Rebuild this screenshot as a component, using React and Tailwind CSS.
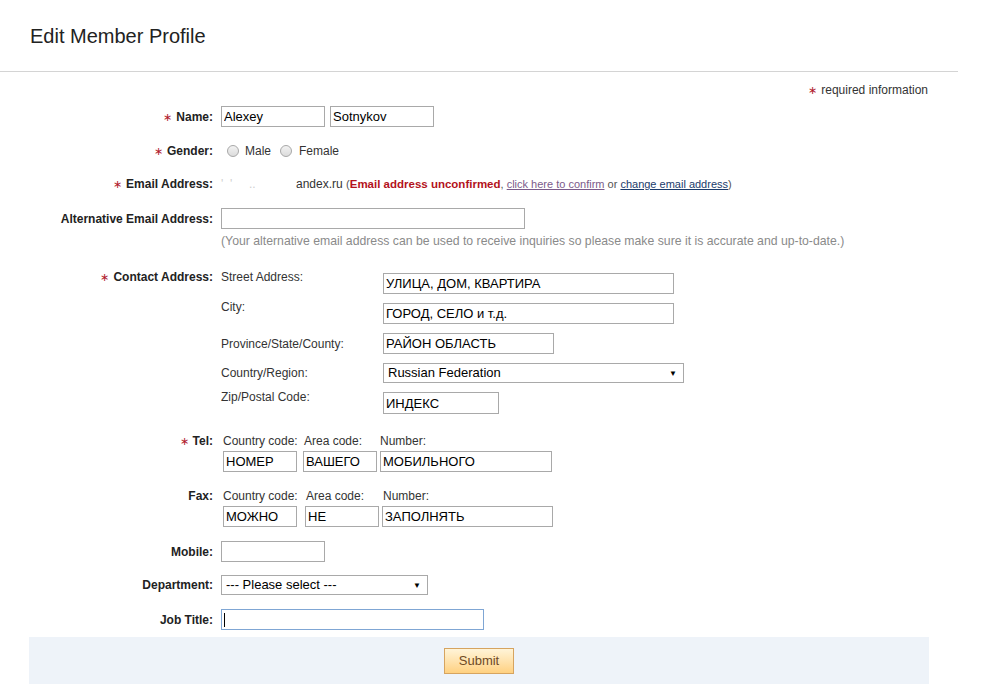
import { useState } from 'react';

const inputCls =
  'h-[21px] border border-[#a9a9a9] bg-white px-[2px] text-[13px] text-black outline-none';

const Star = () => <span className="mr-[4px] text-[11px] font-normal text-[#b0192b]">∗</span>;

const Label = ({ required, children }) => (
  <div className="w-[184px] shrink-0 text-right text-[12px] font-bold leading-[16px] text-[#222]">
    {required && <Star />}
    {children}
  </div>
);

// select without the native arrow, drawn like the old IE dropdown
const FakeSelect = ({ width, value, options }) => (
  <div className={`relative h-[20px] ${width}`}>
    <select
      defaultValue={value}
      className="h-full w-full appearance-none border border-[#a9a9a9] bg-white pl-[4px] text-[13px] leading-[18px] text-black outline-none"
    >
      {options.map((o) => (
        <option key={o}>{o}</option>
      ))}
    </select>
    <span className="pointer-events-none absolute right-[7px] top-[5px] text-[8px] text-black">▼</span>
  </div>
);

const Radio = () => (
  <span className="inline-block h-[12px] w-[12px] rounded-full border border-[#a8a8a8] bg-gradient-to-b from-[#f2f2f2] to-[#dcdcdc]" />
);

export default function App() {
  const [jobTitle, setJobTitle] = useState('');

  return (
    <div className="min-h-[700px] bg-white font-['Liberation_Sans',Arial,sans-serif] text-[12px] text-[#333]">
      <div className="w-[958px] border-b border-[#d4d4d4]">
        <div className="flex h-[71px] items-center pl-[30px] text-[20px] text-[#222]">Edit Member Profile</div>
      </div>

      <div className="w-[958px] px-[29px]">
        {/* required note */}
        <div className="mt-[10px] h-[16px] pr-[1px] text-right leading-[16px]">
          <Star />
          required information
        </div>

        {/* Name */}
        <div className="mt-[8px] flex h-[21px] items-center">
          <Label required>Name:</Label>
          <div className="ml-[8px] flex gap-[5px]">
            <input className={`${inputCls} w-[104px]`} defaultValue="Alexey" />
            <input className={`${inputCls} w-[104px]`} defaultValue="Sotnykov" />
          </div>
        </div>

        {/* Gender */}
        <div className="mt-[14px] flex h-[20px] items-center">
          <Label required>Gender:</Label>
          <div className="ml-[14px] flex items-center">
            <Radio />
            <span className="ml-[6px]">Male</span>
            <span className="ml-[9px] flex">
              <Radio />
            </span>
            <span className="ml-[7px]">Female</span>
          </div>
        </div>

        {/* Email */}
        <div className="mt-[15px] flex h-[16px] items-center">
          <Label required>Email Address:</Label>
          <div className="ml-[8px] whitespace-nowrap leading-[16px]">
            <span className="inline-block w-[75px] text-[#cfcfcf]">'&nbsp;&nbsp;'&nbsp;&nbsp;&nbsp;&nbsp;&nbsp;..</span>
            andex.ru <span className="text-[11px] text-[#555]">(</span>
            <span className="text-[11.5px] font-bold text-[#b3121c]">Email address unconfirmed</span>
            <span className="text-[11px] text-[#555]">
              ,{' '}
              <a href="#" className="text-[#7b5b8b] underline">click here to confirm</a> or{' '}
              <a href="#" className="text-[#1b3b6b] underline">change email address</a>)
            </span>
          </div>
        </div>

        {/* Alternative email */}
        <div className="mt-[16px] flex h-[21px] items-center">
          <Label>Alternative Email Address:</Label>
          <input className={`${inputCls} ml-[8px] w-[304px]`} />
        </div>
        <div className="mt-[4px] h-[16px] whitespace-nowrap pl-[192px] text-[12.25px] leading-[16px] text-[#8a8a8a]">
          (Your alternative email address can be used to receive inquiries so please make sure it is accurate and up-to-date.)
        </div>

        {/* Contact address */}
        <div className="mt-[20px] flex items-start">
          <Label required>Contact Address:</Label>
          <div className="ml-[8px] flex flex-col">
            <div className="flex">
              <div className="w-[162px] leading-[16px]">Street Address:</div>
              <input className={`${inputCls} mt-[4px] w-[291px]`} defaultValue="УЛИЦА, ДОМ, КВАРТИРА" />
            </div>
            <div className="mt-[5px] flex">
              <div className="w-[162px] leading-[16px]">City:</div>
              <input className={`${inputCls} mt-[4px] w-[291px]`} defaultValue="ГОРОД, СЕЛО и т.д." />
            </div>
            <div className="mt-[9px] flex h-[21px] items-center">
              <div className="w-[162px] leading-[16px]">Province/State/County:</div>
              <input className={`${inputCls} w-[171px]`} defaultValue="РАЙОН ОБЛАСТЬ" />
            </div>
            <div className="mt-[9px] flex h-[20px] items-center">
              <div className="w-[162px] leading-[16px]">Country/Region:</div>
              <FakeSelect width="w-[301px]" value="Russian Federation" options={['Russian Federation']} />
            </div>
            <div className="mt-[6px] flex">
              <div className="w-[162px] leading-[16px]">Zip/Postal Code:</div>
              <input className={`${inputCls} mt-[3px] h-[22px] w-[116px]`} defaultValue="ИНДЕКС" />
            </div>
          </div>
        </div>

        {/* Tel */}
        <div className="mt-[19px] flex items-start">
          <Label required>Tel:</Label>
          <div className="ml-[10px] grid grid-cols-[80px_77px_auto] leading-[16px]">
            <div>Country code:</div>
            <div className="pl-[1px]">Area code:</div>
            <div>Number:</div>
            <input className={`${inputCls} mt-[2px] w-[74px]`} defaultValue="НОМЕР" />
            <input className={`${inputCls} mt-[2px] w-[74px]`} defaultValue="ВАШЕГО" />
            <input className={`${inputCls} mt-[2px] w-[172px]`} defaultValue="МОБИЛЬНОГО" />
          </div>
        </div>

        {/* Fax */}
        <div className="mt-[16px] flex items-start">
          <Label>Fax:</Label>
          <div className="ml-[10px] grid grid-cols-[82px_77px_auto] leading-[16px]">
            <div>Country code:</div>
            <div className="pl-[1px]">Area code:</div>
            <div className="pl-[1px]">Number:</div>
            <input className={`${inputCls} mt-[2px] w-[74px]`} defaultValue="МОЖНО" />
            <input className={`${inputCls} mt-[2px] w-[74px]`} defaultValue="НЕ" />
            <input className={`${inputCls} mt-[2px] w-[171px]`} defaultValue="ЗАПОЛНЯТЬ" />
          </div>
        </div>

        {/* Mobile */}
        <div className="mt-[14px] flex h-[21px] items-center">
          <Label>Mobile:</Label>
          <input className={`${inputCls} ml-[8px] w-[104px]`} />
        </div>

        {/* Department */}
        <div className="mt-[13px] flex h-[20px] items-center">
          <Label>Department:</Label>
          <div className="ml-[8px]">
            <FakeSelect width="w-[207px]" value="--- Please select ---" options={['--- Please select ---']} />
          </div>
        </div>

        {/* Job title */}
        <div className="mt-[14px] flex h-[21px] items-center">
          <Label>Job Title:</Label>
          <div className="relative ml-[8px]">
            <input
              className="h-[21px] w-[263px] border border-[#7fa6d4] bg-white px-[2px] text-[13px] text-black outline-none"
              value={jobTitle}
              onChange={(e) => setJobTitle(e.target.value)}
            />
            {!jobTitle && <span className="pointer-events-none absolute left-[3px] top-[4px] h-[14px] w-px bg-black" />}
          </div>
        </div>

        {/* Submit bar */}
        <div className="mt-[7px] flex h-[47px] items-center justify-center bg-[#eef3f9]">
          <button className="h-[26px] w-[70px] border border-[#d6a460] bg-gradient-to-b from-[#fff4d8] to-[#ffd180] text-[13px] text-[#6e4a26]">
            Submit
          </button>
        </div>
      </div>
    </div>
  );
}
